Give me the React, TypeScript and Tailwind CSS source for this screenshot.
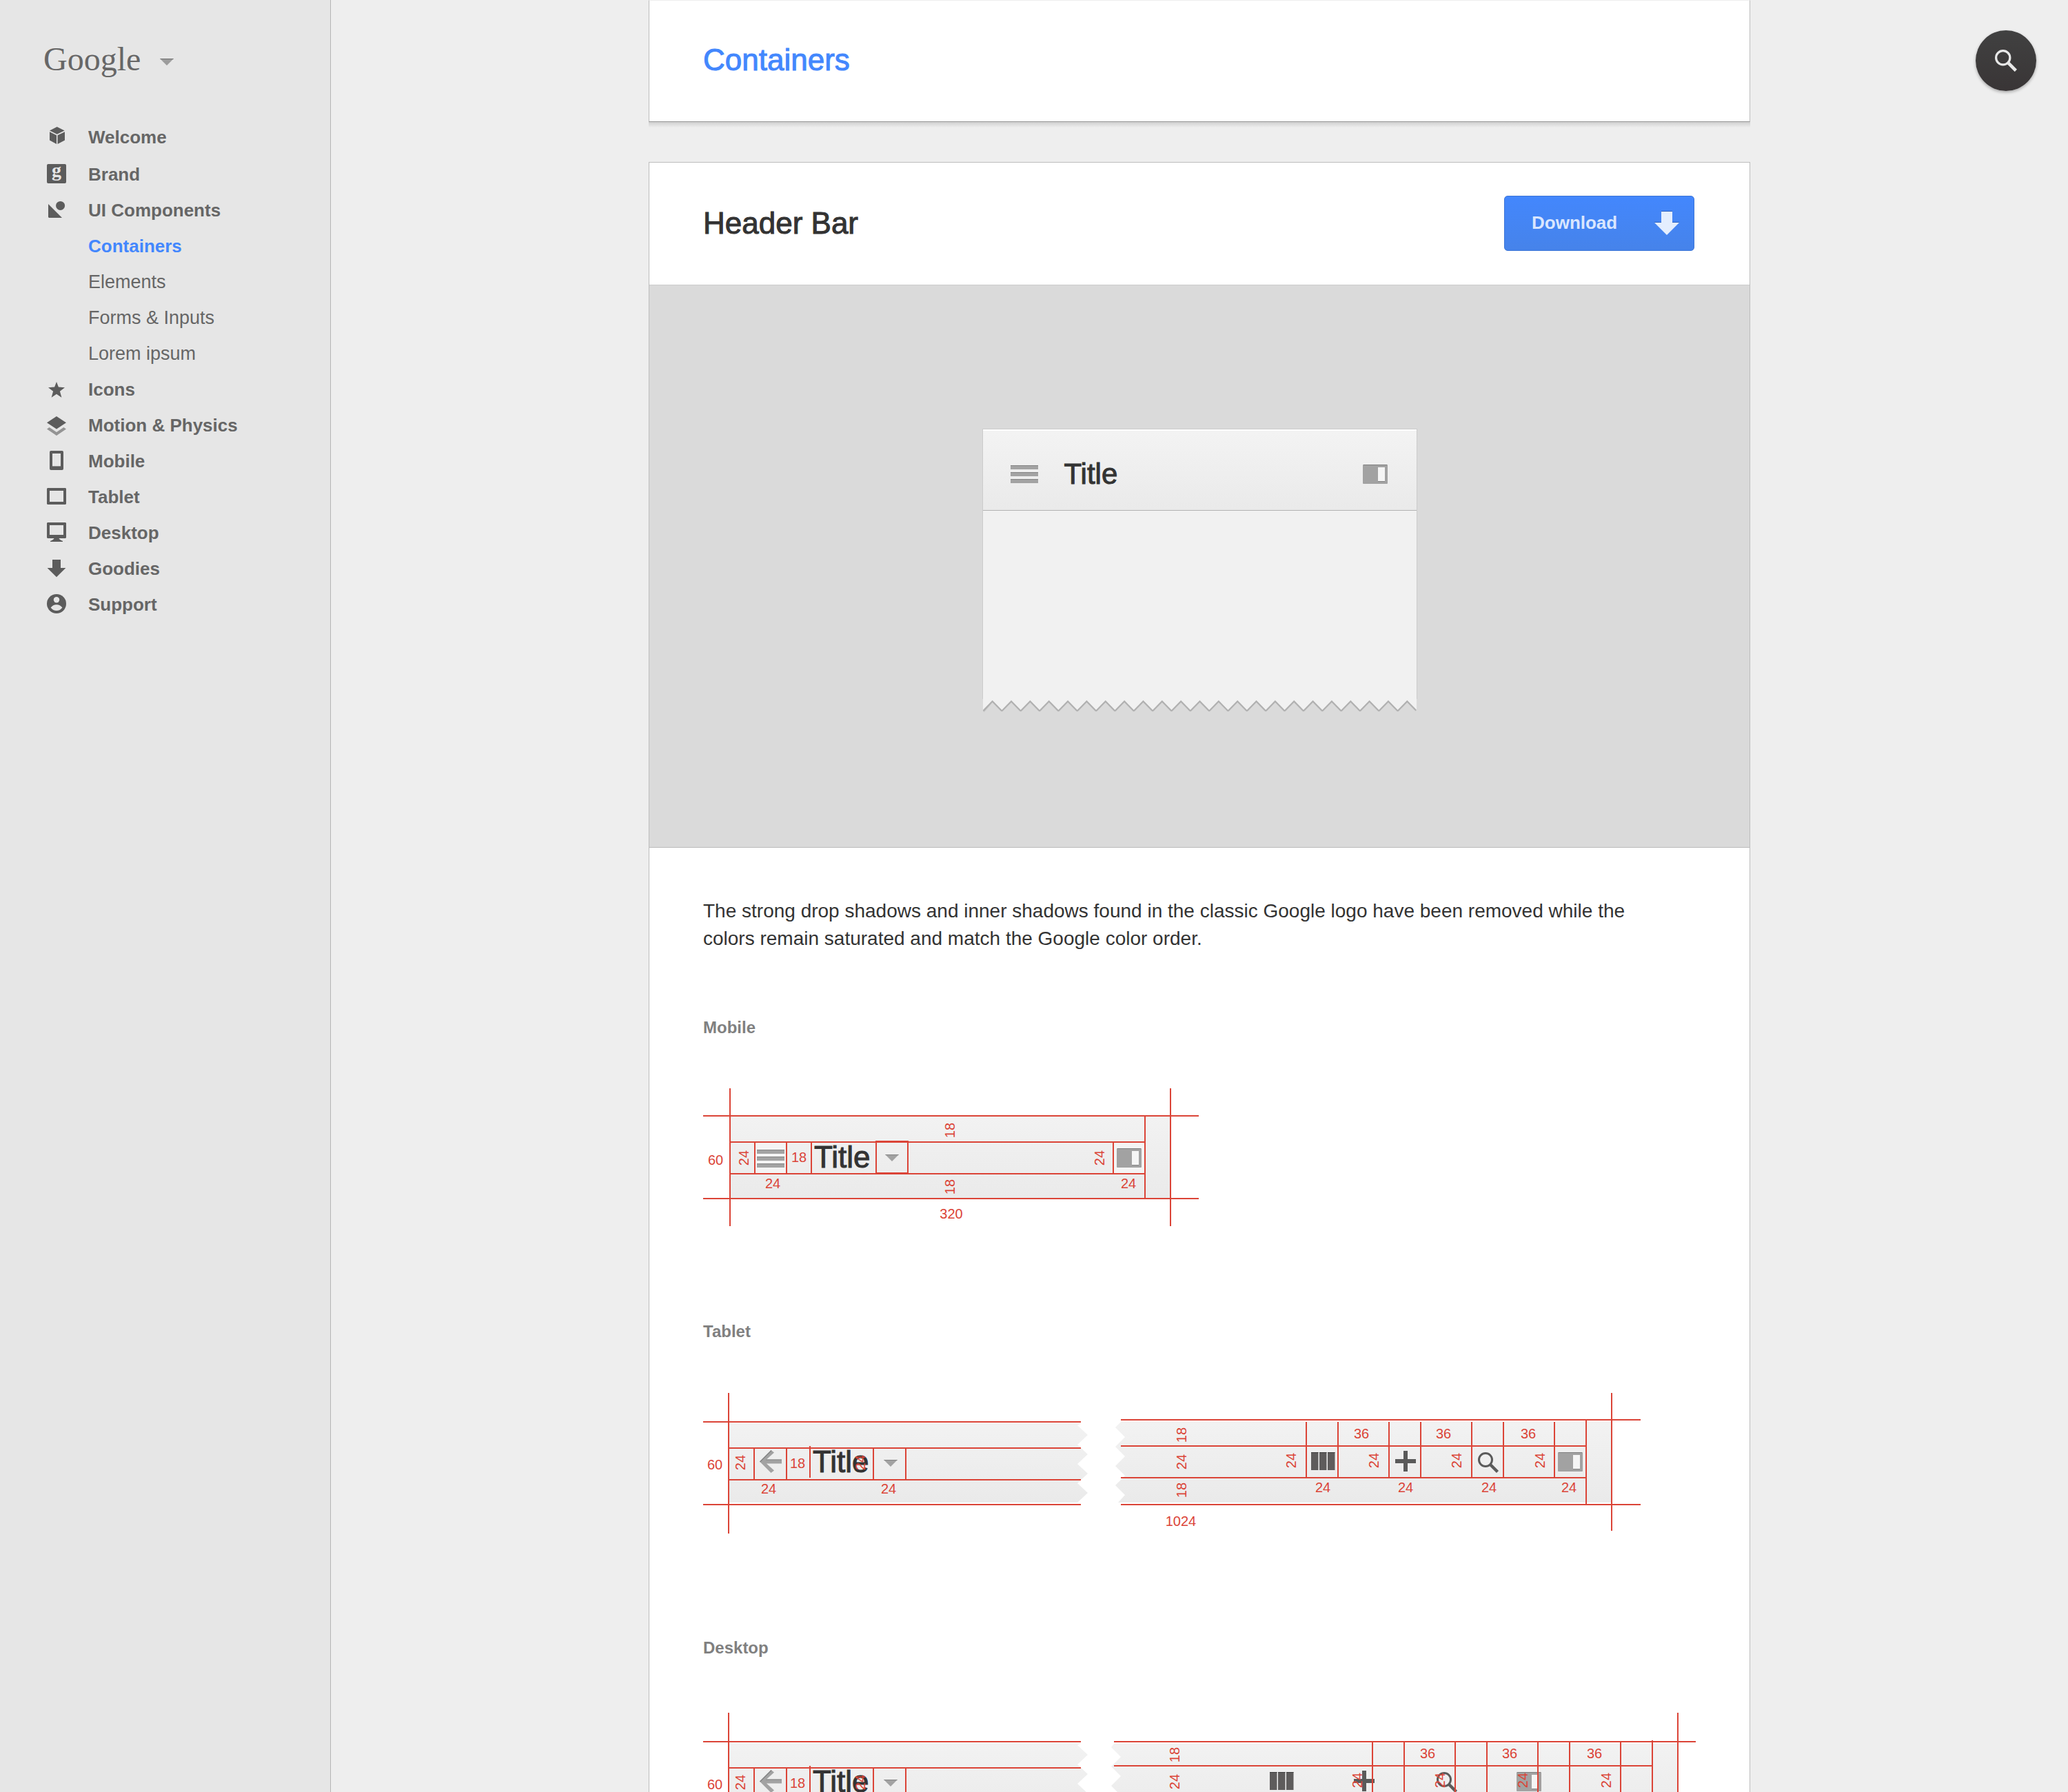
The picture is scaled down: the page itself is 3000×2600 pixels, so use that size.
import type { ReactNode } from "react";

const RED = "#db4437";
const INK = "#5c5c5c";

type NavItem = { label: string; icon?: ReactNode; active?: boolean };

const NAV: NavItem[] = [
  {
    label: "Welcome",
    icon: (
      <path d="M14.7 11 25.6 16.4 14.7 21.8 4 16.4ZM4 18.2 14 23.2V36L4 30.6ZM26 18.2V30.6L15.5 36V23.2Z" />
    ),
  },
  {
    label: "Brand",
    icon: (
      <>
        <rect x="0" y="11" width="28" height="28" rx="2" />
        <text x="14" y="29" textAnchor="middle" fontSize="28" fill="#e6e6e6" className="font-['Liberation_Serif',serif]">
          g
        </text>
      </>
    ),
  },
  {
    label: "UI Components",
    icon: (
      <>
        <path d="M2 17 22 37H3L2 36Z" />
        <circle cx="19.6" cy="19.4" r="6.5" />
      </>
    ),
  },
  { label: "Containers", active: true },
  { label: "Elements" },
  { label: "Forms & Inputs" },
  { label: "Lorem ipsum" },
  {
    label: "Icons",
    icon: <path d="M14 15 16.9 22.6 26 23.2 18.9 28.7 21.4 37.7 14 32.8 6.6 37.7 9.1 28.7 2 23.2 11.1 22.6Z" />,
  },
  {
    label: "Motion & Physics",
    icon: (
      <>
        <path d="M14 13 28 22.3 14 31.5 0 22.3Z" />
        <path d="M0 31.5 3.6 29 14 36 24.4 29 28 31.5 14 41Z" fill="#949494" />
      </>
    ),
  },
  {
    label: "Mobile",
    icon: (
      <>
        <path fillRule="evenodd" d="M6 11H22Q24 11 24 13V37Q24 39 22 39H6Q4 39 4 37V13Q4 11 6 11ZM8 15V34H20V15Z" />
        <path d="M8 33H20V34H8Z" opacity=".6" />
      </>
    ),
  },
  {
    label: "Tablet",
    icon: <path fillRule="evenodd" d="M1 13H27L28 14V36L27 37H1L0 36V14ZM4 17V33H24V17Z" />,
  },
  {
    label: "Desktop",
    icon: (
      <path
        fillRule="evenodd"
        d="M1 11H27L28 12V33L27 34H17.5Q18 36 23 38V39H5V38Q10 36 10.5 34H1L0 33V12ZM4 15V29H24V15Z"
      />
    ),
  },
  { label: "Goodies", icon: <path d="M8 13H20V25H27.4L14 38.3.6 25H8Z" /> },
  {
    label: "Support",
    icon: (
      <>
        <circle cx="14" cy="25" r="14" />
        <circle cx="14" cy="19.2" r="4.2" fill="#e6e6e6" />
        <path d="M5.6 30.5Q9 26.2 14 26.2T22.4 30.5Q19 35 14 35T5.6 30.5Z" fill="#e6e6e6" />
      </>
    ),
  },
];

function Sidebar() {
  return (
    <aside className="w-[480px] shrink-0 border-r border-[#b5b5b5] bg-[#e6e6e6]">
      <div className="flex h-[173px] items-start pt-[60px] pl-[63px]">
        <button type="button" className="flex items-center gap-7 text-[#676767]">
          <span className="font-['Liberation_Serif',serif] text-[48px] leading-[52px]">Google</span>
          <svg width="20" height="11" viewBox="0 0 20 11" className="mt-2" aria-hidden="true">
            <path d="M0 0H20L10 10Z" fill="#9c9c9c" />
            <path d="M0 0H20L19 1H1Z" fill="#6f6f6f" />
          </svg>
        </button>
      </div>
      <nav aria-label="Sections">
        <ul>
          {NAV.map((item) => (
            <li key={item.label} className="h-[52px] pl-[68px] first:mb-0.5">
              <a
                href="#"
                className={
                  "flex items-center gap-8 leading-[52px] " +
                  (item.active
                    ? "text-[26px] font-bold text-[#4387fd]"
                    : item.icon
                      ? "text-[26px] font-bold text-[#666]"
                      : "text-[27px] text-[#666]")
                }
              >
                <svg width="28" height="52" viewBox="0 0 28 52" fill={INK} className="shrink-0" aria-hidden="true">
                  {item.icon}
                </svg>
                {item.label}
              </a>
            </li>
          ))}
        </ul>
      </nav>
    </aside>
  );
}

/* ---------- glyphs shared by the header bars ---------- */

function MenuGlyph() {
  return (
    <g fill="#a3a3a3">
      {[0, 10, 20].map((y) => (
        <g key={y}>
          <rect y={y} width="40" height="6" />
          <rect y={y} width="40" height="1" fill="#858585" />
        </g>
      ))}
    </g>
  );
}

function SplitGlyph() {
  return (
    <g>
      <rect width="36" height="28" rx="1" fill="#a2a2a2" />
      <rect x="1" width="34" height="1" fill="#808080" />
      <rect x="22" y="4" width="10" height="20" fill="#f5f5f5" />
      <rect x="22" y="24" width="10" height="1" fill="#868686" />
    </g>
  );
}

function CaretGlyph() {
  return (
    <g>
      <path d="M0 0H20L10 10Z" fill="#a2a2a2" />
      <path d="M0 0H20L19 1H1Z" fill="#858585" />
    </g>
  );
}

function BackGlyph() {
  return (
    <g>
      <path d="M16.5 0 21 3.5 10 13.5H32V19.5H10L21 29.5 16.5 33 0 16.5Z" fill="#a2a2a2" />
      <path d="M16.5 0 0 16.5 1 17.5 17.5 1ZM10 13.5H32V14.5H9Z" fill="#858585" />
    </g>
  );
}

function ColumnsGlyph() {
  return (
    <g fill="#5e5c5c">
      {[0, 12, 24].map((x) => (
        <g key={x}>
          <rect x={x} width="10.5" height="26" />
          <rect x={x} width="10.5" height="1" fill="#3d3d3d" />
        </g>
      ))}
    </g>
  );
}

function PlusGlyph() {
  return <path d="M12 0H18V12H30V18H18V30H12V18H0V12H12Z" fill="#5a5a5a" />;
}

function SearchGlyph({ color }: { color: string }) {
  return (
    <g fill="none" stroke={color}>
      <circle cx="11" cy="11" r="9.5" strokeWidth="3" />
      <path d="M17.5 17.5 28.5 28.5" strokeWidth="4.4" />
    </g>
  );
}

/* ---------- redline primitives ---------- */

function Lines({ d }: { d: string }) {
  return <path d={d} fill="none" stroke={RED} strokeWidth="2" />;
}

function Num({ x, y, children }: { x: number; y: number; children: string }) {
  return (
    <text x={x} y={y} textAnchor="middle" fontSize="20" fill={RED}>
      {children}
    </text>
  );
}

/* A number read bottom to top; x is its baseline, y its middle. */
function UpNum({ x, y, children }: { x: number; y: number; children: string }) {
  return (
    <text transform={`translate(${x} ${y}) rotate(-90)`} textAnchor="middle" fontSize="20" fill={RED}>
      {children}
    </text>
  );
}

function BarTitle({ x, y }: { x: number; y: number }) {
  return (
    <text x={x} y={y} fontSize="44" fill="#333" stroke="#333" strokeWidth="1">
      Title
    </text>
  );
}

function At({ x, y, children }: { x: number; y: number; children: ReactNode }) {
  return <g transform={`translate(${x} ${y})`}>{children}</g>;
}

function Gradient({ id }: { id: string }) {
  return (
    <defs>
      <linearGradient id={id} x1="0" y1="0" x2="0" y2="1">
        <stop offset="0" stopColor="#f2f2f2" />
        <stop offset="1" stopColor="#eaeaea" />
      </linearGradient>
    </defs>
  );
}

function MobileSpec() {
  return (
    <svg width="720" height="240" viewBox="0 0 720 240" role="img" aria-label="Mobile header bar measurements">
      <Gradient id="bar-mobile" />
      <rect x="39" y="60" width="639" height="119" fill="url(#bar-mobile)" />
      <rect x="75" y="97" width="46" height="46" fill="#f4f4f4" />
      <rect x="595" y="97" width="46" height="46" fill="#f4f4f4" />
      <At x={78} y={108}>
        <MenuGlyph />
      </At>
      <BarTitle x={161} y={134} />
      <At x={264} y={115}>
        <CaretGlyph />
      </At>
      <At x={600} y={106}>
        <SplitGlyph />
      </At>
      <Lines d="M39 19V219M678 19V219M0 59H719M0 179H719M38 97H641M38 143H641M75 97V143M121 97V143M157 97V143M251 96H297V142H251ZM595 97V143M641 60V179" />
      <Num x={18} y={130}>60</Num>
      <Num x={139} y={126}>18</Num>
      <Num x={101} y={164}>24</Num>
      <Num x={617} y={164}>24</Num>
      <Num x={360} y={208}>320</Num>
      <UpNum x={66} y={120}>24</UpNum>
      <UpNum x={582} y={120}>24</UpNum>
      <UpNum x={365} y={80}>18</UpNum>
      <UpNum x={365} y={162}>18</UpNum>
    </svg>
  );
}

/* Left, torn-off half of the wide bars. */
function WideLeft({ fill }: { fill: string }) {
  return (
    <g>
      <path d="M37 65H548L543 68 558 82 543 96 558 110 543 124 558 138 543 152 558 166 543 180H37Z" fill={fill} />
      <At x={82} y={104}>
        <BackGlyph />
      </At>
      <BarTitle x={159} y={136} />
      <At x={262} y={118}>
        <CaretGlyph />
      </At>
      <Lines d="M37 21V225M0 63H548M0 183H548M37 101H548M37 147H548M74 101V147M121 101V147M155 98V144M247 101V147M294 101V147" />
      <Num x={17} y={132}>60</Num>
      <Num x={137} y={130}>18</Num>
      <Num x={95} y={167}>24</Num>
      <Num x={269} y={167}>24</Num>
      <UpNum x={61} y={122}>24</UpNum>
      <UpNum x={235} y={122}>24</UpNum>
    </g>
  );
}

type WideRightProps = {
  fill: string;
  top: number;
  start: number;
  tear: number;
  labels: number;
  grid: number;
  icons: number;
  total: string;
};

/* Right half; grid and icons are shifted independently of the tear. */
function WideRight({ fill, top, start, tear, labels, grid, icons, total }: WideRightProps) {
  const end = grid + 1281;
  const edge = grid + 1318;
  return (
    <g>
      <path
        d={`M${start} ${top + 3}L${tear} 71 ${tear + 14} 85 ${tear} 99 ${tear + 14} 113 ${tear} 127 ${tear + 14} 141 ${tear} 155 ${tear + 14} 169 ${tear + 4} 180H${edge}V${top + 3}Z`}
        fill={fill}
      />
      <At x={882 + icons} y={107}>
        <ColumnsGlyph />
      </At>
      <At x={1004 + icons} y={105}>
        <PlusGlyph />
      </At>
      <At x={1124 + icons} y={107}>
        <SearchGlyph color="#5a5a5a" />
      </At>
      <At x={1240 + icons} y={107}>
        <SplitGlyph />
      </At>
      <Lines
        d={`M${start} ${top}H${edge + 42}M${start} 98H${end}M${start} 144H${end}M${start} 183H${edge + 42}M${end} 61V182M${edge} 21V221`}
      />
      {[875, 921, 995, 1041, 1115, 1161, 1235].map((x) => (
        <Lines key={x} d={`M${x + grid} 63V144`} />
      ))}
      {[955, 1074, 1197].map((x) => (
        <Num key={x} x={x + grid} y={87}>36</Num>
      ))}
      {[860, 980, 1100, 1221].map((x) => (
        <UpNum key={x} x={x + grid} y={119}>24</UpNum>
      ))}
      {[899, 1019, 1140, 1256].map((x) => (
        <Num key={x} x={x + grid} y={165}>24</Num>
      ))}
      <UpNum x={labels} y={82}>18</UpNum>
      <UpNum x={labels} y={121}>24</UpNum>
      <UpNum x={labels} y={162}>18</UpNum>
      <Num x={labels - 8} y={214}>{total}</Num>
    </g>
  );
}

function TabletSpec() {
  return (
    <svg width="1440" height="260" viewBox="0 0 1440 260" role="img" aria-label="Tablet header bar measurements">
      <Gradient id="bar-tablet" />
      <WideLeft fill="url(#bar-tablet)" />
      <WideRight fill="url(#bar-tablet)" top={60} start={606} tear={598} labels={701} grid={0} icons={0} total="1024" />
    </svg>
  );
}

function DesktopSpec() {
  return (
    <svg width="1440" height="260" viewBox="0 0 1440 260" role="img" aria-label="Desktop header bar measurements">
      <Gradient id="bar-desktop" />
      <WideLeft fill="url(#bar-desktop)" />
      <WideRight fill="url(#bar-desktop)" top={63} start={596} tear={592} labels={691} grid={96} icons={-60} total="1280" />
    </svg>
  );
}

/* ---------- page parts ---------- */

const TEETH = Array.from({ length: 23 }, (_, i) => `L${((i + 0.5) * 629) / 23} 2L${((i + 1) * 629) / 23} 16`).join("");

function Preview() {
  return (
    <div className="flex justify-center border-y border-t-[#cbcbcb] border-b-[#bababa] bg-[#dadada] pt-[208px] pb-[195px]">
      <div className="w-[631px]">
        <div className="border-x border-t border-[#cbcbcb]">
          <div className="flex h-[118px] items-center border-t-2 border-b border-t-white border-b-[#b2b2b2] bg-linear-to-b from-[#f3f3f3] to-[#eaeaea] pt-2.5 pr-[42px] pl-10">
            <button type="button" aria-label="Menu">
              <svg width="40" height="26" viewBox="0 0 40 26">
                <MenuGlyph />
              </svg>
            </button>
            <h3 className="ml-[38px] grow text-[42px] leading-[48px] text-[#333] [-webkit-text-stroke:1px_#333]">
              Title
            </h3>
            <button type="button" aria-label="Side panel">
              <svg width="36" height="28" viewBox="0 0 36 28">
                <SplitGlyph />
              </svg>
            </button>
          </div>
          <div className="h-[273px] bg-[#f1f1f1]" />
        </div>
        <svg width="629" height="20" viewBox="0 0 629 20" className="mx-px block" aria-hidden="true">
          <g fill="none" stroke="#000" strokeLinejoin="round">
            <path d={`M0 18${TEETH}`} strokeWidth="5" opacity=".06" />
            <path d={`M0 17${TEETH}`} strokeWidth="4" opacity=".14" />
          </g>
          <path d={`M0 0V16${TEETH}V0Z`} fill="#f1f1f1" />
        </svg>
      </div>
    </div>
  );
}

function Spec({ name, className, children }: { name: string; className: string; children: ReactNode }) {
  return (
    <section className={className}>
      <h3 className="text-2xl leading-8 font-bold text-[#808080]">{name}</h3>
      {children}
    </section>
  );
}

export default function App() {
  return (
    <div className="relative flex h-screen overflow-hidden bg-[#eee] font-['Liberation_Sans',Arial,sans-serif]">
      <Sidebar />
      <main className="grow overflow-y-auto [scrollbar-width:none]">
        <div className="mx-auto w-full max-w-[1598px]">
          <header className="flex h-[177px] items-center border-x border-t border-b border-x-[#bdbdbd] border-t-[#eee] border-b-[#969696] bg-white px-[78px] pb-1">
            <h1 className="text-[44px] leading-[52px] text-[#4387fd] [-webkit-text-stroke:1px_#4387fd]">Containers</h1>
          </header>
          <div className="h-2 bg-linear-to-b from-[#cfcfcf] to-[#eee]" />

          <article className="mt-[50px] border border-[#bdbdbd] bg-white">
            <div className="flex h-[177px] items-center justify-between pr-20 pb-0.5 pl-[78px]">
              <h2 className="text-[44px] leading-[52px] text-[#333] [-webkit-text-stroke:1px_#333]">Header Bar</h2>
              <button
                type="button"
                className="flex h-20 w-[276px] items-center justify-between rounded-[5px] border border-[#3b74d6] bg-linear-to-b from-[#4387fd] to-[#4683ea] pr-[21px] pl-[39px] text-[26px] font-bold text-[#d9e6fe]"
              >
                Download
                <svg width="36" height="36" viewBox="0 0 36 36" aria-hidden="true">
                  <path d="M10 0H26V1H10ZM0 16H10V17H0ZM26 16H36V17H26Z" fill="#2f62bd" />
                  <path d="M10 1H26V17H36L18 35 0 17H10Z" fill="#e4eefe" />
                </svg>
              </button>
            </div>
            <Preview />
            <div className="px-[78px] pt-[72px] pb-20">
              <p className="max-w-[1400px] text-[28px] leading-10 text-[#333]">
                The strong drop shadows and inner shadows found in the classic Google logo have been removed while the
                colors remain saturated and match the Google color order.
              </p>
              <Spec name="Mobile" className="mt-[93px] flex flex-col gap-[53px]">
                <MobileSpec />
              </Spec>
              <Spec name="Tablet" className="mt-[116px] flex flex-col gap-[52px]">
                <TabletSpec />
              </Spec>
              <Spec name="Desktop" className="mt-[115px] flex flex-col gap-[57px]">
                <DesktopSpec />
              </Spec>
            </div>
          </article>
        </div>
      </main>
      <button
        type="button"
        aria-label="Search"
        className="absolute top-11 right-[46px] flex size-[88px] items-center justify-center rounded-full bg-linear-to-b from-[#414141] to-[#393536] shadow-[0_2px_4px_rgba(0,0,0,0.3)]"
      >
        <svg width="32" height="32" viewBox="0 0 30 30" aria-hidden="true">
          <SearchGlyph color="#e8e8e8" />
        </svg>
      </button>
    </div>
  );
}
